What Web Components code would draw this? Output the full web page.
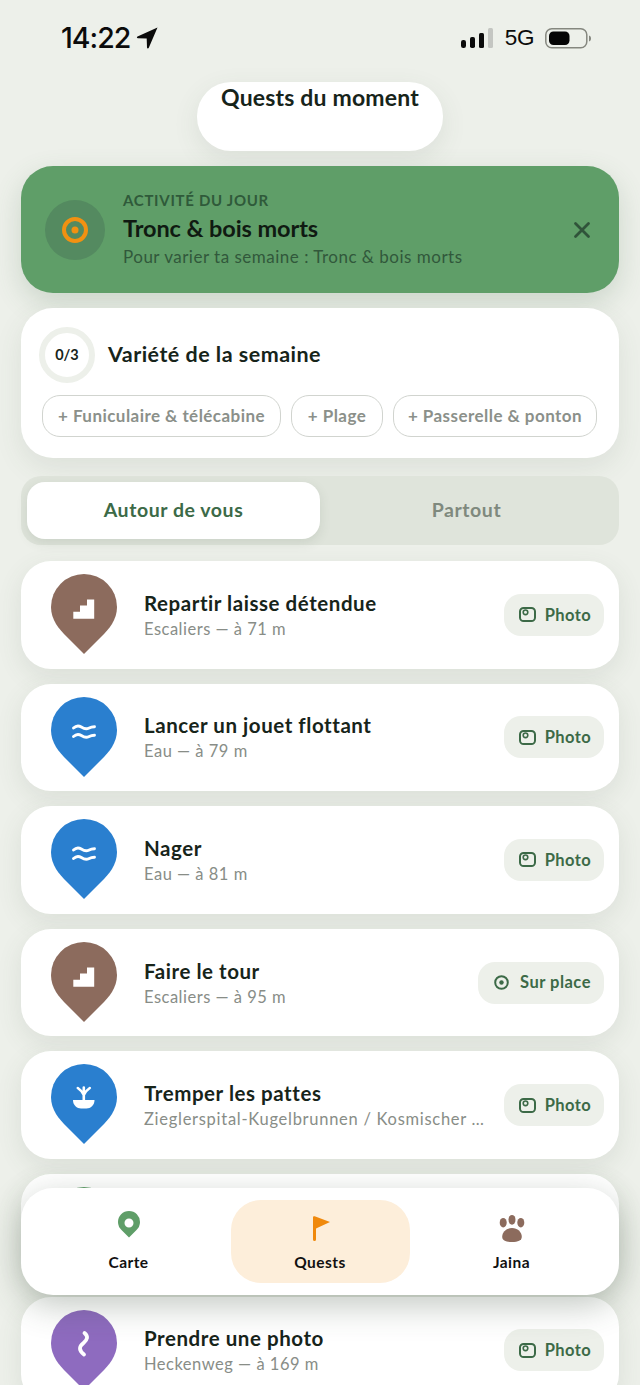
<!DOCTYPE html>
<html lang="fr"><head><meta charset="utf-8"><title>Quests du moment</title>
<style>
html,body{margin:0;padding:0;background:#edf0ea;height:1385px;overflow:hidden}
body{font-family:Lato,"Noto Sans",sans-serif;color:#17241a}
</style></head><body>
<x-app>
  <x-status-bar></x-status-bar>
  <x-title-pill>Quests du moment</x-title-pill>
  <x-daily-card label="Activité du jour" heading="Tronc &amp; bois morts" sub="Pour varier ta semaine : Tronc &amp; bois morts"></x-daily-card>
  <x-variety-card>
    <x-chip style="width:239px">+ Funiculaire &amp; télécabine</x-chip>
    <x-chip style="width:92px">+ Plage</x-chip>
    <x-chip style="width:204px">+ Passerelle &amp; ponton</x-chip>
  </x-variety-card>
  <x-segment first="Autour de vous" second="Partout"></x-segment>
  <x-quest-list>
    <x-quest-row kind="stairs" action="Photo" heading="Repartir laisse détendue" sub="Escaliers — à 71 m"></x-quest-row>
    <x-quest-row kind="water" action="Photo" heading="Lancer un jouet flottant" sub="Eau — à 79 m"></x-quest-row>
    <x-quest-row kind="water" action="Photo" heading="Nager" sub="Eau — à 81 m"></x-quest-row>
    <x-quest-row kind="stairs" action="Sur place" heading="Faire le tour" sub="Escaliers — à 95 m"></x-quest-row>
    <x-quest-row kind="fountain" action="Photo" heading="Tremper les pattes" sub="Zieglerspital-Kugelbrunnen / Kosmischer …" style="--sub-spacing:.72px"></x-quest-row>
    <x-quest-row kind="green"></x-quest-row>
    <x-quest-row kind="path" action="Photo" heading="Prendre une photo" sub="Heckenweg — à 169 m"></x-quest-row>
  </x-quest-list>
  <x-bottom-nav>
    <x-nav-item icon="pin">Carte</x-nav-item>
    <x-nav-item icon="flag" active>Quests</x-nav-item>
    <x-nav-item icon="paw">Jaina</x-nav-item>
  </x-bottom-nav>
</x-app>
<script>
function def(name, css, html){
  customElements.define(name, class extends HTMLElement{
    connectedCallback(){
      if(this.shadowRoot) return;
      const r=this.attachShadow({mode:'open'});
      const a=n=>(this.getAttribute(n)||'').replace(/&/g,'&amp;');
      r.innerHTML='<style>'+css+'</style>'+(typeof html==='function'?html(a,this):html);
    }
  });
}
def('x-app',`:host{display:block;position:relative;height:1385px;overflow:hidden;background:#edf0ea}`,`<slot></slot>`);

def('x-status-bar',`
:host{display:flex;justify-content:space-between;align-items:flex-start;height:82px;box-sizing:border-box;padding:22px 49px 0 61px;color:#0b0b0b}
.l,.r{display:flex;align-items:center}
.t{font:500 28.5px/32px Inter,"Liberation Sans",sans-serif;letter-spacing:-1px}
.l svg{margin-left:6px;margin-top:-1px}
.g{font:400 22.5px/26px "Liberation Sans",sans-serif;margin:0 11px 0 12px;letter-spacing:-.4px}
.r{padding-top:3px}
`,`<div class="l"><span class="t">14:22</span>
<svg width="22" height="22" viewBox="0 0 22 22"><path d="M21.500 .5 1.500 9.500c-1 .5-.7 1.800.4 1.800l8.800.2.300 9c0 1 1.300 1.300 1.800.3z" fill="#0b0b0b"/></svg></div>
<div class="r">
<svg width="32" height="20" viewBox="0 0 32 20"><rect x="0" y="12" width="5" height="8" rx="2.200" fill="#0b0b0b"/><rect x="9" y="9" width="5" height="11" rx="1.800" fill="#0b0b0b"/><rect x="18" y="5" width="5" height="15" rx="1.500" fill="#0b0b0b"/><rect x="27" y="0" width="5" height="20" rx="1.500" fill="#c4c6c2"/></svg>
<span class="g">5G</span>
<svg width="46" height="21" viewBox="0 0 46 21"><rect x=".8" y=".8" width="41" height="19" rx="6" fill="none" stroke="#85877f" stroke-width="1.500"/><rect x="4" y="3.500" width="20.500" height="13.500" rx="4.500" fill="#050505"/><path d="M44 7.500c1.300.4 2 1.500 2 3s-.7 2.600-2 3z" fill="#85877f"/></svg>
</div>`);

def('x-title-pill',`
:host{display:block;box-sizing:border-box;width:246px;height:69px;margin:0 auto 15px;background:#fff;border-radius:34px;text-align:center;
font:700 23px/30px Lato,sans-serif;color:#17241a;letter-spacing:.17px;box-shadow:0 8px 26px rgba(70,90,70,.1)}
`,`<slot></slot>`);

def('x-daily-card',`
:host{display:flex;align-items:center;box-sizing:border-box;height:127px;margin:0 21px 15px;padding:0 24px;background:#5f9e68;border-radius:32px;box-shadow:0 10px 28px rgba(70,110,75,.2)}
.i{width:60px;height:60px;border-radius:50%;background:#548a60;display:flex;align-items:center;justify-content:center;flex:none;margin-right:18px}
.x{flex:1;display:flex;flex-direction:column}
.a{font:700 15px/18px Lato,sans-serif;text-transform:uppercase;color:#2f5a3a;letter-spacing:.7px;margin-bottom:4px}
.h{font:700 23.5px/30px Lato,sans-serif;color:#101a12;letter-spacing:-.08px;margin-bottom:3px}
.s{font:400 17px/22px Lato,sans-serif;color:#31583b;letter-spacing:.5px}
svg.c{flex:none;margin-right:3px}
`,a=>`<div class="i"><svg width="28" height="28" viewBox="0 0 28 28"><circle cx="14" cy="14" r="11" fill="none" stroke="#f29111" stroke-width="4"/><circle cx="14" cy="14" r="3.500" fill="#f29111"/></svg></div>
<div class="x"><div class="a">${a('label')}</div><div class="h">${a('heading')}</div><div class="s">${a('sub')}</div></div>
<svg class="c" width="20" height="20" viewBox="0 0 20 20"><path d="M3.500 3.500l13 13M16.500 3.500l-13 13" stroke="#30533a" stroke-width="2.800" stroke-linecap="round"/></svg>`);

def('x-variety-card',`
:host{display:block;box-sizing:border-box;height:150px;margin:0 21px 18px;padding:18px 21px 0;background:#fff;border-radius:32px;box-shadow:0 10px 28px rgba(70,90,70,.1)}
.t{display:flex;align-items:center;height:58px;margin-left:-3px;margin-bottom:11px}
.r{width:56px;height:56px;flex:none;margin-right:13px;border-radius:50%;box-sizing:border-box;border:6px solid #edf0ea;display:flex;align-items:center;justify-content:center;font:700 14.500px/1 Lato,sans-serif;color:#17241a}
.h{font:700 21.5px/26px Lato,sans-serif;color:#17241a;letter-spacing:.48px;margin-top:-2px}
.c{display:flex;gap:10px}
`,`<div class="t"><div class="r">0/3</div><div class="h">Variété de la semaine</div></div><div class="c"><slot></slot></div>`);

def('x-chip',`
:host{display:block;flex:none;box-sizing:border-box;height:42px;border:1.500px solid #d1d4cf;border-radius:18px;white-space:nowrap;text-align:center;
font:700 17px/39px Lato,sans-serif;color:#8b908a;letter-spacing:.45px}
`,`<slot></slot>`);

def('x-segment',`
:host{display:flex;box-sizing:border-box;height:69px;margin:0 21px 16px;padding:6px;background:#dfe4db;border-radius:20px}
div{flex:1;display:flex;align-items:center;justify-content:center;box-sizing:border-box;padding-bottom:2px;font:700 19.5px/1 Lato,sans-serif;letter-spacing:.55px;border-radius:18px}
.a{background:#fff;color:#3c6a47;box-shadow:0 4px 12px rgba(60,80,60,.12)}
.b{color:#7f897e}
`,a=>`<div class="a">${a('first')}</div><div class="b">${a('second')}</div>`);

def('x-quest-list',`:host{display:flex;flex-direction:column;gap:15px;margin:0 21px}`,`<slot></slot>`);

const pinBody='M33 0A33 33 0 0 1 66 33C66 46 58 55 50 63L33 80L16 63C8 55 0 46 0 33A33 33 0 0 1 33 0Z';
const glyphs={
 stairs:['#8c6b5d','<path d="M36 25.500h7.200v19.200H22.300v-7h6.700v-6.200h7z" fill="#fff"/>'],
 water:['#2a7fcf','<path d="M22.500 31c2.700-2.600 5.300-2.600 7.800-1s5 2.400 7.300 1.200 3.200-1.500 5.900-1.500M22.500 39.500c2.700-2.600 5.300-2.600 7.800-1s5 2.400 7.300 1.200 3.200-1.500 5.900-1.500" fill="none" stroke="#fff" stroke-width="2.900" stroke-linecap="round"/>'],
 fountain:['#2a7fcf','<path d="M22 36h21.500c0 5.500-4 8.500-8 8.500h-5.500c-4 0-8-3-8-8.500z" fill="#fff"/><path d="M32.800 36V23.500M32.800 31c-1.500-3.500-3-5-6-7M32.800 31c1.500-3.500 3-5 6-7" fill="none" stroke="#fff" stroke-width="2.600" stroke-linecap="round"/>'],
 path:['#8e6bbf','<path d="M33.500 23C37.500 26.500 36.500 29.500 32.500 33C27.500 37 28 40.500 33 44.500" fill="none" stroke="#fff" stroke-width="3.800" stroke-linecap="round"/>'],
 green:['#5f9e68','']
};
def('x-quest-row',`
:host{display:flex;align-items:center;box-sizing:border-box;height:107.6px;padding:0 15px 0 30px;background:#fff;border-radius:30px;box-shadow:0 8px 26px rgba(70,90,70,.11)}
svg.p{flex:none;margin-right:27px;align-self:flex-start;margin-top:13px}
.x{flex:1;min-width:0;padding-right:20px}
.h{font:700 20.5px/26px Lato,sans-serif;color:#17241a;letter-spacing:.55px;white-space:nowrap;margin-bottom:2px}
.s{font:400 16.5px/22px Lato,sans-serif;color:#888d87;letter-spacing:var(--sub-spacing,.5px);white-space:nowrap}
.c{flex:none;height:42px;box-sizing:border-box;display:flex;align-items:center;gap:9px;padding:0 13px 0 15px;background:#edf0ea;border-radius:17px;font:700 16.5px/1 Lato,sans-serif;letter-spacing:.38px;color:#3c6a47}
.c.sp{gap:11px;padding-left:16px;letter-spacing:.5px}
`,a=>{
 const g=glyphs[a('kind')];
 const act=a('action');
 const ph=act==='Photo';
 const ic=ph
  ?'<svg width="17" height="15" viewBox="0 0 17 15"><rect x="1" y="1" width="15" height="13" rx="3.600" fill="none" stroke="#3c6a47" stroke-width="2"/><circle cx="6.500" cy="5.300" r="2.300" fill="none" stroke="#3c6a47" stroke-width="1.600"/></svg>'
  :'<svg width="15" height="15" viewBox="0 0 15 15"><circle cx="7.500" cy="7.500" r="6.300" fill="none" stroke="#3c6a47" stroke-width="2"/><circle cx="7.500" cy="7.500" r="2.200" fill="#3c6a47"/></svg>';
 return `<svg class="p" width="66" height="80" viewBox="0 0 66 80"><path d="${pinBody}" fill="${g[0]}"/>${g[1]}</svg>
 <div class="x"><div class="h">${a('heading')}</div><div class="s">${a('sub')}</div></div>${act?`<div class="c ${ph?'':'sp'}">${ic}<span>${act}</span></div>`:''}`;
});

def('x-bottom-nav',`
:host{position:absolute;left:21px;right:21px;top:1188px;height:107px;box-sizing:border-box;padding:12px 18px;display:grid;grid-template-columns:repeat(3,1fr);gap:12.500px;background:#fff;border-radius:32px;box-shadow:0 10px 34px rgba(50,70,50,.3)}
`,`<slot></slot>`);

const navIcons={
 pin:'<svg width="26" height="34" viewBox="0 0 26 34"><path fill-rule="evenodd" d="M13 27.500L5.500 20.100A11 11 0 1 1 20.500 20.100ZM13 8.500a4.500 4.500 0 1 0 0 9a4.500 4.500 0 0 0 0-9Z" fill="#5f9e68"/></svg>',
 flag:'<svg width="26" height="34" viewBox="0 0 26 34"><path d="M6 7.500c0-1 .8-1.600 1.700-1.200L23 12 9 18.500V29.500a1.500 1.500 0 0 1-3 0z" fill="#f0890c"/></svg>',
 paw:'<svg width="26" height="34" viewBox="0 0 26 34"><g fill="#8c6b5d"><ellipse cx="4.200" cy="12.700" rx="3.500" ry="4.800"/><ellipse cx="13" cy="9.800" rx="3.500" ry="4.900"/><ellipse cx="21.800" cy="12.700" rx="3.500" ry="4.800"/><path d="M13 18c5.500 0 9.800 4 9.800 8.800 0 3.800-3.800 5.200-9.800 5.200S3.200 30.600 3.200 26.800C3.200 22 7.500 18 13 18z"/></g></svg>'
};
def('x-nav-item',`
:host{display:flex;flex-direction:column;align-items:center;border-radius:30px;padding-top:10px;font:700 15.5px/20px Lato,sans-serif;color:#111;letter-spacing:.45px}
:host([active]){background:#fdeeda}
svg{display:block}
span{margin-top:8px}
`,a=>`${navIcons[a('icon')]}<span><slot></slot></span>`);
</script>
</body></html>
